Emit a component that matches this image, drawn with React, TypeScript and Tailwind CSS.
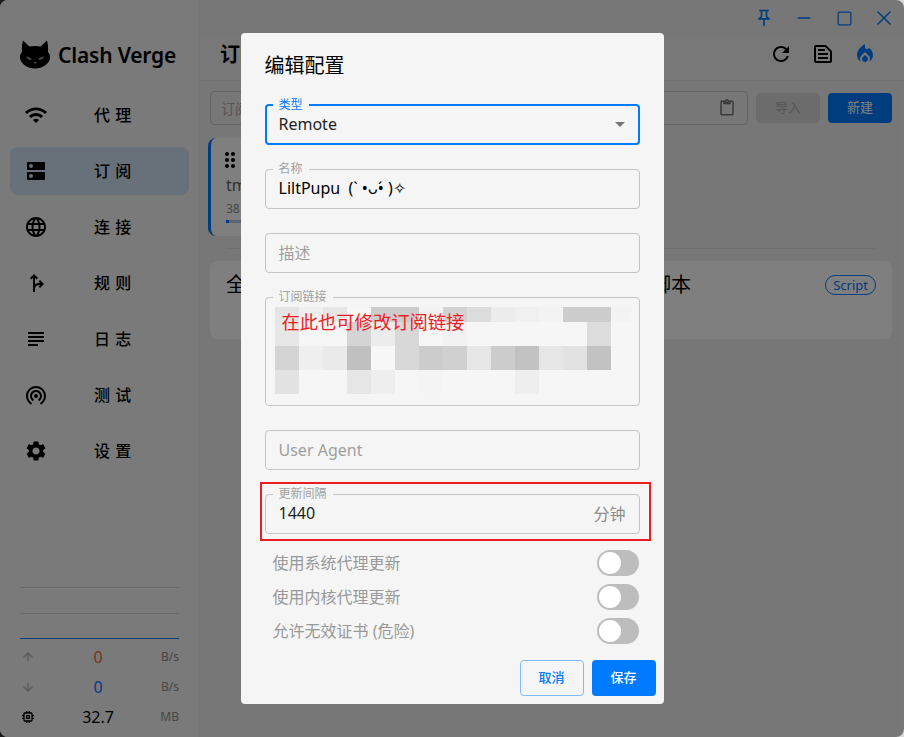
import { ArrowDown, ArrowUp, Minus, Square, X } from "lucide-react";
import {
  MdWifi,
  MdDns,
  MdLanguage,
  MdForkRight,
  MdSubject,
  MdWifiTethering,
  MdSettings,
  MdRefresh,
  MdOutlineTextSnippet,
  MdLocalFireDepartment,
  MdContentPaste,
  MdMemory,
  MdDragIndicator,
  MdOutlinePushPin,
} from "react-icons/md";

const FONT = "font-['Noto_Sans','Noto_Sans_CJK_SC',sans-serif]";

const nav = [
  { label: "代 理", icon: MdWifi },
  { label: "订 阅", icon: MdDns, active: true },
  { label: "连 接", icon: MdLanguage },
  { label: "规 则", icon: MdForkRight },
  { label: "日 志", icon: MdSubject },
  { label: "测 试", icon: MdWifiTethering },
  { label: "设 置", icon: MdSettings },
];

// blurred subscription url, one entry per mosaic block
const mosaic = [
  "bg-[#e4e4e4]", "bg-[#efefef]", "bg-[#e6e6e6]", "bg-[#f6f6f6]", "bg-[#cccccc]", "bg-[#cccccc]", "bg-[#f3f3f3]", "bg-[#d2d2d2]", "bg-[#dcdcdc]", "bg-[#ececec]", "bg-[#f0f0f0]", "bg-[#f3f3f3]", "bg-[#cccccc]", "bg-[#cccccc]", "bg-[#f3f3f3]",
  "bg-[#e6e6e6]", "bg-[#f6f6f6]", "bg-[#f6f6f6]", "bg-[#d4d4d4]", "bg-[#ececec]", "bg-[#d8d8d8]", "bg-[#f6f6f6]", "bg-[#f2f2f2]", "bg-[#f6f6f6]", "bg-[#f6f6f6]", "bg-[#f6f6f6]", "bg-[#f6f6f6]", "bg-[#f6f6f6]", "bg-[#dcdcdc]", "bg-[#f6f6f6]",
  "bg-[#d4d4d4]", "bg-[#efefef]", "bg-[#eaeaea]", "bg-[#c0c0c0]", "bg-[#f7f7f7]", "bg-[#d8d8d8]", "bg-[#cccccc]", "bg-[#d0d0d0]", "bg-[#e6e6e6]", "bg-[#cccccc]", "bg-[#c2c2c2]", "bg-[#e6e6e6]", "bg-[#e2e2e2]", "bg-[#c2c2c2]", "bg-[#f6f6f6]",
  "bg-[#e2e2e2]", "bg-[#f6f6f6]", "bg-[#f6f6f6]", "bg-[#e6e6e6]", "bg-[#eeeeee]", "bg-[#f6f6f6]", "bg-[#f4f4f4]", "bg-[#f6f6f6]", "bg-[#f6f6f6]", "bg-[#f6f6f6]", "bg-[#eeeeee]", "bg-[#f6f6f6]", "bg-[#f6f6f6]", "bg-[#f6f6f6]", "bg-[#f6f6f6]",
];

function CatLogo() {
  return (
    <svg width="32" height="30" viewBox="0 0 32 30" className="shrink-0">
      <path
        d="M4 1.5 L10.5 7.5 C13.5 6.8 18.5 6.8 21.5 7.5 L28 1.5 C29 5 29.4 9 29 13 C30.6 15 31.4 17 31 19.5 C29.6 25.5 23 29.5 16 29.5 C9 29.5 2.4 25.5 1 19.5 C0.6 17 1.4 15 3 13 C2.6 9 3 5 4 1.5 Z"
        fill="#000"
      />
      <path d="M7 17.5 C9 17.5 11.5 18.5 13 20.5 C10.5 21.5 8 20.5 7 17.5 Z" fill="#8a8a8a" />
      <path d="M25 17.5 C23 17.5 20.5 18.5 19 20.5 C21.5 21.5 24 20.5 25 17.5 Z" fill="#8a8a8a" />
      <path d="M14.2 23 H17.8 L16 25 Z" fill="#8a8a8a" />
    </svg>
  );
}

function Sidebar() {
  return (
    <aside className="w-[200px] h-full shrink-0 flex flex-col bg-[#f4f4f4] border-r border-[#ebebeb]">
      <div className="h-[91px] pt-[39px] pl-[19px] flex items-start gap-[7px]">
        <CatLogo />
        <span className="text-[21px] leading-[32px] font-semibold tracking-[-0.2px] text-black">Clash Verge</span>
      </div>
      <nav className="px-[10px] flex flex-col gap-2">
        {nav.map((item) => (
          <div
            key={item.label}
            className={`h-12 rounded-lg flex items-center pl-[14px] ${item.active ? "bg-[#d0e0f4]" : ""}`}
          >
            <item.icon size={24} className="text-black shrink-0" />
            <span className="ml-[47px] -translate-x-[1px] text-[16px] font-medium text-black whitespace-pre [word-spacing:1px]">{item.label}</span>
          </div>
        ))}
      </nav>
      <div className="mt-auto mx-5 pb-[5px]">
        <div className="border-t border-[#d4d4d4] h-[26px]" />
        <div className="border-t border-[#d4d4d4] h-[25px]" />
        <div className="border-t border-[#1a7fe8] h-[4px]" />
        <Stat icon={<ArrowUp size={14} className="text-[#b0b0b0]" />} value="0" unit="B/s" color="text-[#e66c3e]" />
        <Stat icon={<ArrowDown size={14} className="text-[#b0b0b0]" />} value="0" unit="B/s" color="text-[#007aff]" />
        <Stat icon={<MdMemory size={16} className="text-black" />} value="32.7" unit="MB" color="text-black" />
      </div>
    </aside>
  );
}

function Stat({ icon, value, unit, color }: { icon: React.ReactNode; value: string; unit: string; color: string }) {
  return (
    <div className="h-[30px] flex items-center">
      <span className="w-[16px] flex justify-center">{icon}</span>
      <span className={`flex-1 text-center text-[16px] pl-[1px] ${color}`}>{value}</span>
      <span className="text-[12px] text-[#8c8c8c] w-[20px] flex justify-end">{unit}</span>
    </div>
  );
}

function Main() {
  return (
    <main className="flex-1 h-full flex flex-col bg-[#eeeeee] min-w-0">
      <div className="h-9 shrink-0 flex items-center justify-end text-[#007aff]">
        <span className="w-10 flex justify-center"><MdOutlinePushPin size={20} /></span>
        <span className="w-10 flex justify-center"><Minus size={20} strokeWidth={1.6} /></span>
        <span className="w-10 flex justify-center"><Square size={17} strokeWidth={1.8} /></span>
        <span className="w-10 flex justify-center"><X size={24} strokeWidth={1.5} /></span>
      </div>
      <div className="h-[45px] shrink-0 flex items-center justify-between pl-5 pr-[27px] pb-[6px] bg-[#f0f0f0] border-b border-[#e6e6e6]">
        <span className="text-[20px] font-bold text-black">订阅</span>
        <div className="flex items-center gap-[18px] -mt-[2px]">
          <MdRefresh size={24} className="text-black" />
          <MdOutlineTextSnippet size={24} className="text-black" />
          <MdLocalFireDepartment size={24} className="text-[#007aff]" />
        </div>
      </div>
      <div className="flex-1 pl-[10px] pr-[10px] pt-[10px] border-r-2 border-[#f0f0f0]">
        <div className="flex items-center gap-2 h-[34px]">
          <div className="flex-1 h-[34px] rounded border border-[#c4c4c4] flex items-center justify-between pl-[10px] pr-[11px]">
            <span className="text-[14px] text-[#a8a8a8]">订阅文件链接</span>
            <MdContentPaste size={18} className="text-[#757575]" />
          </div>
          <div className="w-16 h-[30px] rounded bg-[#d9d9d9] flex items-center justify-center text-[13px] text-[#a8a8a8]">导入</div>
          <div className="w-16 h-[30px] rounded bg-[#007aff] flex items-center justify-center text-[13px] text-white">新建</div>
        </div>
        <div className="mt-[13px] -ml-[2px] h-[98px] w-[300px] rounded-lg bg-white border-l-[3px] border-[#007aff] pl-[15px] pt-[10px]">
          <MdDragIndicator size={24} className="text-black -ml-[8px]" />
          <div className="text-[16px] text-[#666666] leading-[24px] mt-[1px]">tmp</div>
          <div className="text-[12px] text-[#8c8c8c] leading-[18px] mt-[3px]">38</div>
          <div className="h-[3px] mt-[2px] bg-[#b4cde6] w-full">
            <div className="h-[3px] w-[3px] bg-[#007aff]" />
          </div>
        </div>
        <div className="mt-3 ml-[16px] mr-[16px] border-t border-[#e0e0e0]" />
        <div className="mt-3 h-[78px] rounded-lg bg-[#ffffff] pl-4 pr-4 pt-[12px] flex justify-between items-start">
          {/* the middle of this title sits behind the dialog */}
          <div className="w-[465px] flex justify-between text-[20px] leading-[24px] text-black">
            <span>全局</span>
            <span>脚本</span>
          </div>
          <span className="mt-[2px] h-5 rounded-full border border-[#007aff] px-[7px] text-[13px] leading-[18px] text-[#007aff]">Script</span>
        </div>
      </div>
    </main>
  );
}

function Field({ label, children, className = "", focused = false }: { label?: string; children?: React.ReactNode; className?: string; focused?: boolean }) {
  return (
    <div className={`relative rounded w-full ${focused ? "border-2 border-[#007aff] px-[12px]" : "border border-[#c4c4c4] px-[13px]"} ${className}`}>
      {label && (
        <span className={`absolute -top-[8px] bg-[#f5f5f5] px-[6px] text-[12px] leading-[14px] ${focused ? "left-[6px] text-[#007aff]" : "left-[7px] text-[#a0a0a0]"}`}>
          {label}
        </span>
      )}
      {children}
    </div>
  );
}

function Toggle({ label }: { label: string }) {
  return (
    <div className="h-[34px] flex items-center justify-between pl-2 pr-[1px]">
      <span className="text-[16px] text-[#999999]">{label}</span>
      <div className="w-[42px] h-[26px] rounded-full bg-[#bdbdbd] p-[2px]">
        <div className="size-[22px] rounded-full bg-white" />
      </div>
    </div>
  );
}

function Dialog() {
  return (
    <div className="absolute inset-0 rounded-lg bg-black/50 flex items-center justify-center">
      <div className="w-[423px] h-[671px] rounded bg-[#f5f5f5] flex flex-col pl-6 pr-6 relative">
        <h2 className="pt-[17px] text-[20px] leading-[32px] text-black font-normal">编辑配置</h2>

        <Field label="类型" focused className="h-[41px] mt-[22px] flex items-center justify-between">
          <span className="text-[16px] text-[#1f1f1f] -translate-y-px">Remote</span>
          <span className="mr-[1px] border-x-[5px] border-t-[5px] border-x-transparent border-t-[#757575]" />
        </Field>

        <Field label="名称" className="h-10 mt-6 flex items-center">
          <span className="text-[16px] text-black whitespace-pre -translate-y-px">LiltPupu  (  ̀•ᴗ•́ )✧</span>
        </Field>

        <Field className="h-10 mt-6 flex items-center">
          <span className="text-[16px] text-[#a0a0a0]">描述</span>
        </Field>

        <Field label="订阅链接" className="h-[109px] mt-6 pt-[9px]">
          <div className="-mx-[4px] w-[356px] overflow-hidden">
            <div className="grid grid-cols-[repeat(15,24px)] grid-rows-[15px_24px_24px_24px]">
              {mosaic.map((c, i) => (
                <div key={i} className={c} />
              ))}
            </div>
          </div>
          <span className="absolute left-[16px] top-[12px] text-[18.3px] leading-[24px] text-[#ed1c24]">在此也可修改订阅链接</span>
        </Field>

        <Field className="h-10 mt-6 flex items-center">
          <span className="text-[16px] text-[#a0a0a0]">User Agent</span>
        </Field>

        <Field label="更新间隔" className="h-10 mt-6 flex items-center justify-between">
          <span className="text-[16px] text-[#1f1f1f] -translate-y-px">1440</span>
          <span className="text-[16px] text-[#8c8c8c]">分钟</span>
        </Field>

        <div className="mt-[12px]">
          <Toggle label="使用系统代理更新" />
          <Toggle label="使用内核代理更新" />
          <Toggle label="允许无效证书 (危险)" />
        </div>

        <div className="mt-auto mb-2 -mr-[16px] flex justify-end gap-2">
          <div className="w-16 h-9 rounded border border-[#7fbcff] flex items-center justify-center text-[13px] font-medium text-[#007aff]">取消</div>
          <div className="w-16 h-9 rounded bg-[#007aff] flex items-center justify-center text-[13px] font-medium text-white">保存</div>
        </div>

        {/* annotation drawn on top of the screenshot */}
        <div className="absolute left-[19px] top-[449px] w-[391px] h-[59px] border-2 border-[#ed1c24] pointer-events-none" />
      </div>
    </div>
  );
}

export default function App() {
  return (
    <div className={`relative w-[904px] h-[737px] overflow-hidden bg-[linear-gradient(90deg,#1a1a1a_50%,#d8d8d8_50%)] ${FONT}`}>
      <div className="w-full h-full flex rounded-lg overflow-hidden">
        <Sidebar />
        <Main />
      </div>
      <Dialog />
    </div>
  );
}
